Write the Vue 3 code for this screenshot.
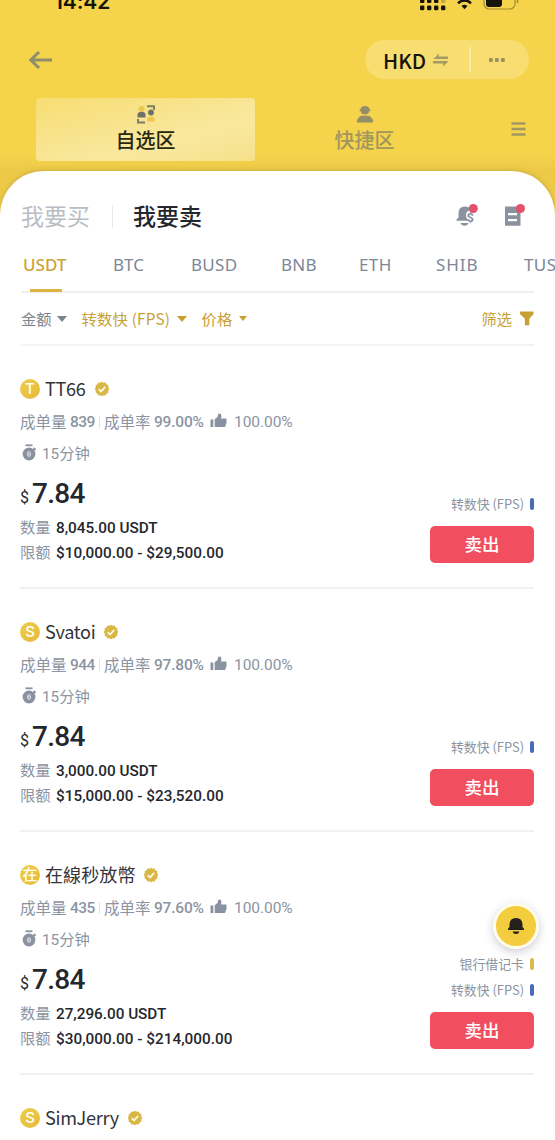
<script setup>
const coins = [
  { name: 'USDT', cls: 'c1' },
  { name: 'BTC', cls: 'c2' },
  { name: 'BUSD', cls: 'c3' },
  { name: 'BNB', cls: 'c4' },
  { name: 'ETH', cls: 'c5' },
  { name: 'SHIB', cls: 'c6' },
  { name: 'TUSD', cls: 'c7' },
]
const offers = [
  { initial: 'T', name: 'TT66', latin: true, deals: '839', rate: '99.00%', qty: '8,045.00 USDT', limit: '$10,000.00 - $29,500.00', pays: [{ label: '转数快 (FPS)', color: 'blue' }] },
  { initial: 'S', name: 'Svatoi', latin: true, deals: '944', rate: '97.80%', qty: '3,000.00 USDT', limit: '$15,000.00 - $23,520.00', pays: [{ label: '转数快 (FPS)', color: 'blue' }] },
  { initial: '在', name: '在線秒放幣', deals: '435', rate: '97.60%', qty: '27,296.00 USDT', limit: '$30,000.00 - $214,000.00', pays: [{ label: '银行借记卡', color: 'gold' }, { label: '转数快 (FPS)', color: 'blue' }] },
  { initial: 'S', name: 'SimJerry', latin: true },
]
</script>

<template>
  <div class="screen">
    <header class="top">
      <div class="status">
        <span class="clock">14:42</span>
        <svg class="status-icons" width="100" height="14" viewBox="0 0 100 14">
          <g fill="#16140a">
            <rect x="1" y="-1" width="4.4" height="4" rx="1" /><rect x="8" y="-1" width="4.4" height="4" rx="1" /><rect x="15" y="-1" width="4.4" height="4" rx="1" />
            <rect x="1" y="5.500" width="4.400" height="4.800" rx="1.400" /><rect x="8" y="5.500" width="4.400" height="4.800" rx="1.400" /><rect x="15" y="5.500" width="4.400" height="4.800" rx="1.400" /><rect x="22" y="5.500" width="4.400" height="4.800" rx="1.400" />
            <path d="M45.500 9.200l-3-3.200q3-2.400 6 0z" />
          </g>
          <rect x="22" y="-1" width="4.400" height="4" rx="1" fill="#c9a53e" />
          <path d="M39 3.200q6.500-5.600 13 0" fill="none" stroke="#16140a" stroke-width="2.600" />
          <rect x="65" y="-8" width="31" height="17" rx="5" fill="none" stroke="#a38b30" stroke-width="1.200" />
          <rect x="67" y="-6" width="16" height="13" rx="3" fill="#16140a" />
          <path d="M98.500 -1v4" stroke="#a38b30" stroke-width="1.500" />
        </svg>
      </div>
      <div class="nav">
        <svg class="back" width="26" height="20" viewBox="0 0 26 20" fill="none" stroke="#8f8d6c" stroke-width="3"><path d="M3 10h22M12 2L3.800 10l8.200 8" /></svg>
        <div class="capsule">
          <span class="hkd">HKD</span>
          <svg class="swap" width="18" height="14" viewBox="0 0 18 14"><path d="M1.500 6L6.800.500V3.500H16V6zM16.500 8L11.200 13.500V10.500H1V8z" fill="#a39b66" /></svg>
          <i class="cap-line"></i>
          <svg class="dots" width="18" height="4" viewBox="0 0 18 4" fill="#9a925d"><rect x="1" width="3.800" height="4" rx="1" /><rect x="7" width="3.800" height="4" rx="1" /><rect x="13" width="3.800" height="4" rx="1" /></svg>
        </div>
      </div>
      <div class="zones">
        <div class="zone active">
          <svg width="20" height="19" viewBox="0 0 20 19">
            <circle cx="5.500" cy="4" r="2.900" fill="#edc850" />
            <path d="M1.500 12.500V10q0-3.300 4-3.300t4 3.300v2.500z" fill="#6d7168" />
            <path d="M2 14v3.500h7" stroke="#7d7d69" stroke-width="2" fill="none" />
            <path d="M11 1.300h7V5" stroke="#7d7d69" stroke-width="2" fill="none" />
            <circle cx="15" cy="7.500" r="2.900" fill="#6d7168" />
            <path d="M11 16.500V15q0-3.600 4-3.600T19 15v1.500z" fill="#edc850" />
          </svg>
          <span>自选区</span>
        </div>
        <div class="zone">
          <svg width="20" height="19" viewBox="0 0 20 19" fill="#948f68"><path d="M4 5.200L5.400 4.300Q6.300 1 10 1t4.600 3.300L16 5.200l-1.500.8Q13.500 9.600 10 9.600T5.500 6zM2 17.500v-2.400q2.500-4.300 5-4.300h6q2.500 0 5 4.300v2.400z" /></svg>
          <span>快捷区</span>
        </div>
        <svg class="menu" width="15" height="16" viewBox="0 0 15 16" stroke="#a29962" stroke-width="2.400"><path d="M.500 2.500h14M.500 8h14M.500 13.500h14" /></svg>
      </div>
    </header>

    <main class="sheet">
      <div class="side">
        <span class="buy">我要买</span><i class="side-line"></i><span class="sell">我要卖</span>
        <svg class="bell" width="26" height="26" viewBox="0 0 26 26">
          <path d="M1.500 17.800v-1.300l2-2V10q0-6.500 6.500-6.500 3.500 0 5 2.200v1.500q-4 1-4 4.800t3 5.800z" fill="#8b929f" />
          <path d="M5.500 20h8q-1 2.800-4 2.800t-4-2.800z" fill="#8b929f" />
          <text x="11.500" y="19" font-family="Roboto" font-size="13" font-weight="700" fill="#8b929f">$</text>
          <circle cx="18.300" cy="5.500" r="4.500" fill="#e5506a" />
        </svg>
        <svg class="doc" width="26" height="26" viewBox="0 0 26 26">
          <path d="M3 3.500h15.500v19.300H3zM6 10v2.200h9V10zM6 16v2.200h9V16z" fill="#8b929f" fill-rule="evenodd" />
          <circle cx="18.500" cy="5.500" r="4.500" fill="#e5506a" />
        </svg>
      </div>
      <nav class="coins">
        <span v-for="c in coins" :key="c.name" :class="c.cls">{{ c.name }}</span>
      </nav>
      <div class="filters">
        <span class="f1">金额</span><i class="caret gray"></i>
        <span class="f2">转数快 (FPS)</span><i class="caret"></i>
        <span class="f3">价格</span><i class="caret small"></i>
        <span class="f4">筛选</span>
        <svg width="14" height="15" viewBox="0 0 14 15"><path d="M0 .500h13.500V3L9.300 7.800v6.400H4.900V7.800L0 3z" fill="#c7a034" /></svg>
      </div>

      <section v-for="o in offers" :key="o.name" class="offer">
        <div class="who">
          <span class="avatar">{{ o.initial }}</span>
          <span class="name" :class="{ latin: o.latin }">{{ o.name }}</span>
          <svg class="badge" width="16" height="16" viewBox="0 0 16 16">
            <path d="M8 .800l1.700 1 2-.2.900 1.800 1.800.9-.2 2 1 1.700-1 1.700.2 2-1.800.9-.9 1.800-2-.2-1.700 1-1.700-1-2 .2-.9-1.800-1.800-.9.200-2-1-1.700 1-1.700-.2-2 1.800-.9.900-1.800 2 .2z" fill="#d9b744" />
            <path d="M4.700 8.200l2.300 2.300 4.200-4.600" fill="none" stroke="#fffbe9" stroke-width="1.700" />
          </svg>
        </div>
        <template v-if="o.deals">
          <div class="stats">
            <span class="k1">成单量</span><b class="deals">{{ o.deals }}</b><i></i><span class="k2">成单率</span><b class="rate">{{ o.rate }}</b>
            <svg width="17" height="16" viewBox="0 0 17 16" fill="#8a91a0"><path d="M.500 6.500h2.800V14H.500zM4.700 14V6.300L7.500 4 8.300.800h2.600q1 2 .1 4.700h5.500V10L15 14z" /></svg>
            <span class="like">100.00%</span>
          </div>
          <div class="time">
            <svg width="15" height="18" viewBox="0 0 15 18"><path d="M3.500 1.300h7" stroke="#8a91a0" stroke-width="1.800" /><circle cx="7" cy="10" r="6.400" fill="#8a91a0" /><path d="M10.700 5.200l1.600-1.900 1.900 1.900-1.500 1.500z" fill="#8a91a0" /><ellipse cx="7" cy="10" rx="1.800" ry="2.700" fill="#fff" /><path d="M7 8v4" stroke="#8a91a0" stroke-width="1.200" /></svg>
            <span>15分钟</span>
          </div>
          <div class="price"><small>$</small><b>7.84</b></div>
          <div class="row"><span>数量</span><b class="qty">{{ o.qty }}</b></div>
          <div class="row"><span>限额</span><b class="limit">{{ o.limit }}</b></div>
          <div class="action">
            <div v-for="p in o.pays" :key="p.label" class="pay"><span>{{ p.label }}</span><i :class="p.color"></i></div>
            <button>卖出</button>
          </div>
        </template>
      </section>
    </main>

    <div class="float">
      <svg width="18" height="18" viewBox="0 0 18 18" fill="#24211c"><path d="M1 13v-1.300L2.500 10V7.300Q2.900 1 9 1t6.500 6.300V10l1.500 1.700V13zM5.500 14.500h7q-.7 2.500-3.500 2.500t-3.500-2.500z" /></svg>
    </div>
  </div>
</template>

<style>
body { overflow: hidden; }
</style>
<style scoped>
* { box-sizing: border-box; }
.screen { position: relative; width: 555px; height: 1140px; overflow: hidden; background: #ecca47; font-family: Roboto, "Noto Sans CJK SC", sans-serif; color: #24272d; }
svg { display: block; flex: none; }
span, b { white-space: nowrap; }
.top { height: 171px; background: linear-gradient(#f5d34b 0, #f5d34b 155px, #ecca47 171px); }
.status { height: 39px; display: flex; justify-content: space-between; padding: 0 16px 0 54px; }
.clock { font: 600 21px/24px Inter, sans-serif; margin-top: -10px; letter-spacing: -.1px; color: #16140a; }
.status-icons { width: 100px; margin-right: 20px; }
.nav { height: 41px; display: flex; align-items: center; justify-content: space-between; padding: 0 26px 0 27px; }
.capsule { width: 164px; height: 39px; border-radius: 20px; background: #f8dd70; display: flex; align-items: center; padding-left: 18px; }
.hkd { font: 500 20.500px/30px "Noto Sans CJK SC", sans-serif; width: 49px; color: #17150a; }
.cap-line { width: 2px; height: 25px; background: #fae9a7; margin: 0 17px 0 19px; }
.zones { display: flex; padding: 18px 28px 0 36px; height: 91px; align-items: flex-start; }
.zone { width: 219px; height: 63px; display: flex; flex-direction: column; align-items: center; padding-top: 7px; color: #a1965d; font: 500 20px/29px "Noto Sans CJK SC", sans-serif; }
.zone span { margin-top: 1px; height: 29px; }
.zone.active { border-radius: 4px; background: linear-gradient(165deg, #f7dd72, #f9e89f 65%, #f6e08a); color: #29270d; }
.menu { margin: 23px 0 0 37px; }
.sheet { height: 969px; background: #fff; border-radius: 44px 44px 0 0; box-shadow: 0 -1px 4px #b8983890; overflow: hidden; }
.side { height: 76px; padding: 14px 27px 0 21px; display: flex; align-items: center; font: 500 23px/34px "Noto Sans CJK SC", sans-serif; }
.side span { margin-top: -2px; }
.buy { color: #b9bdc3; width: 91px; font-weight: 400; }
.side-line { width: 1px; height: 23px; background: #e6e8eb; margin-right: 20px; }
.bell { margin-left: auto; }
.doc { margin-left: 21px; }
.coins { position: relative; height: 46px; margin: 0 21px; border-bottom: 2px solid #eff0f2; display: flex; color: #7c8797; font: 400 17px/36px "Noto Sans", sans-serif; }
.coins::after { content: ""; position: absolute; left: 9px; bottom: -1px; width: 32px; height: 3px; background: #dcb541; }
.coins span { flex: none; }
.c1 { width: 92px; padding-left: 2px; color: #cba438; font-weight: 500; }
.c2 { width: 78px; }
.c3 { width: 90px; letter-spacing: .3px; }
.c4 { width: 78px; letter-spacing: .3px; }
.c5 { width: 77px; letter-spacing: .4px; }
.c6 { width: 88px; letter-spacing: .9px; }
.c7 { letter-spacing: .4px; }
.filters { height: 53px; margin: 0 21px; border-bottom: 2px solid #f2f3f5; display: flex; align-items: center; font: 400 15.300px/24px "Noto Sans CJK SC", sans-serif; color: #c7a034; }
.filters span { margin-top: -2px; }
.f1 { color: #7c8490; }
.f2 { width: 90px; letter-spacing: .2px; }
.caret { border: 5px solid transparent; border-top: 6px solid #c7a034; border-bottom: 0; margin: 0 15px 0 5px; flex: none; }
.f1 + .caret { margin-left: 5px; }
.caret.gray { border-top-color: #7c8490; }
.caret.small { border-width: 4px; border-top-width: 5px; border-bottom: 0; margin-left: 7px; }
.f4 { margin-left: auto; margin-right: 8px; }
.offer { position: relative; height: 243px; margin: 0 21px 0 20px; padding-top: 27px; border-bottom: 2px solid #f0f1f3; color: #8c94a2; }
.who { height: 32px; display: flex; align-items: center; }
.avatar { width: 20px; height: 20px; margin-right: 5px; border-radius: 50%; background: linear-gradient(135deg, #edcf4b, #e7b83a); color: #fff; display: flex; align-items: center; justify-content: center; font: 500 15px/20px Inter, "Noto Sans CJK TC", sans-serif; }
.name { font: 400 18.100px/28px "Noto Sans CJK TC", sans-serif; color: #32343a; margin-top: -2px; }
.name.latin { letter-spacing: -.3px; }
.badge { margin-left: 8px; }
.stats { height: 33px; display: flex; align-items: center; font-size: 15.500px; }
.stats i { width: 1px; height: 12px; background: #e1e3e7; margin: 0 4px 0 4px; }
.k1, .k2 { font: 400 15.500px/24px "Noto Sans CJK SC", sans-serif; width: 50px; margin-top: -2px; }
.stats b { font-weight: 500; }
.deals { width: 25px; letter-spacing: -.5px; }
.rate { width: 56px; letter-spacing: -.2px; }
.stats svg { margin-top: -2px; }
.like { margin-left: 7px; letter-spacing: -.05px; }
.time { height: 30px; display: flex; align-items: center; font-size: 15.300px; }
.time span { margin-top: -2px; }
.time svg { margin: 0 5px 0 2px; }
.price { height: 47px; display: flex; align-items: baseline; color: #24272d; line-height: 51px; }
.price small { font-size: 16px; width: 12px; }
.price b { font-size: 28px; font-weight: 500; letter-spacing: -.7px; }
.row { height: 25px; display: flex; align-items: center; font: 400 15.300px/24px Roboto, "Noto Sans CJK SC", sans-serif; }
.row span { width: 36px; }
.row b { color: #24272d; font-weight: 500; }
.qty { letter-spacing: -.02px; }
.limit { letter-spacing: .02px; }
.action { position: absolute; right: 0; bottom: 24px; width: 104px; }
.pay { height: 26px; display: flex; align-items: center; justify-content: flex-end; font: 400 12.900px/20px "Noto Sans CJK SC", sans-serif; }
.pay span { margin-top: -1px; }
.pay i { width: 4px; height: 12px; border-radius: 2px; margin-left: 6px; background: #486bb5; }
.pay i.gold { background: #d9b953; }
.action button { display: block; width: 104px; height: 37px; margin-top: 9px; border: 0; border-radius: 5px; background: #f14e60; color: #fff; font: 500 17.500px/35px "Noto Sans CJK SC", sans-serif; padding: 0 0 2px; }
.float { position: absolute; left: 493px; top: 903px; width: 46px; height: 46px; border-radius: 50%; background: #f4cd3f; border: 3px solid #fffce9; box-shadow: 0 3px 10px #42466a45; display: flex; align-items: center; justify-content: center; }
</style>
